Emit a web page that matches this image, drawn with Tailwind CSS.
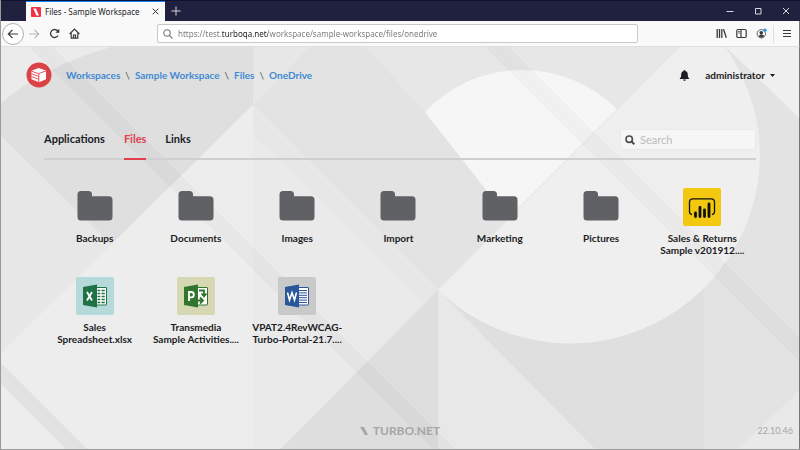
<!DOCTYPE html>
<html lang="en">

<head>
  <meta charset="UTF-8">
  <meta name="viewport" content="width=device-width, initial-scale=1.0">
  <title>Files - Sample Workspace</title>
  <script src="https://cdn.jsdelivr.net/npm/@tailwindcss/browser@4"></script>
</head>

<body class="min-h-screen flex flex-col bg-[#e8e8e8] border-l border-b border-[#999999] font-['Lato',sans-serif] text-[#1b1c24]">

  <!-- Title bar -->
  <div class="h-[21px] flex items-stretch bg-[#20213f] border-t border-[#101033] font-['Noto_Sans',sans-serif]">
    <div class="ml-[25px] w-[139px] flex items-center bg-[#f9f9fa] border-t border-[#0a84ff] pl-[5px] pr-1.5">
      <svg class="size-2.5 shrink-0" viewBox="0 0 10 10">
        <rect width="10" height="10" rx="1" fill="#ee3347" />
        <path d="M2.3 1.5h2.6L8 8.5H5.4z" fill="#fff" />
      </svg>
      <span class="ml-1 flex-1 text-[8px] leading-3 whitespace-nowrap">Files - Sample Workspace</span>
      <button type="button" aria-label="Close tab">
        <svg class="size-[7px]" viewBox="0 0 7 7" stroke="#333" fill="none"><path d="M.7.7l5.6 5.6M6.3.7L.7 6.3" /></svg>
      </button>
    </div>
    <button type="button" aria-label="New tab" class="ml-1.5">
      <svg class="size-[10px]" viewBox="0 0 10 10" stroke="#d4d4df" fill="none"><path d="M5 .5v9M.5 5h9" /></svg>
    </button>
    <div class="ml-auto mr-2.5 flex items-center gap-5 text-[#d8d8e2]">
      <button type="button" aria-label="Minimize">
        <svg class="size-2" viewBox="0 0 8 8" stroke="currentColor" fill="none"><path d="M.5 4.5h7" /></svg>
      </button>
      <button type="button" aria-label="Maximize">
        <svg class="size-2" viewBox="0 0 8 8" stroke="currentColor" fill="none"><path d="M1.5 1.5h5.5v5.5h-5.5z" /></svg>
      </button>
      <button type="button" aria-label="Close window">
        <svg class="size-2" viewBox="0 0 8 8" stroke="currentColor" fill="none"><path d="M1 1l6 6M7 1L1 7" /></svg>
      </button>
    </div>
  </div>

  <!-- Toolbar -->
  <div class="h-[26px] flex items-center bg-[#f9f9fa] border-b border-[#e0e0e1] border-r border-r-[#777777] pl-px pr-2 text-[#3a3a3e] font-['Noto_Sans',sans-serif]">
    <button type="button" aria-label="Back" class="size-[22px] flex items-center justify-center rounded-full border border-[#b1b1b1] bg-white">
      <svg class="size-3" viewBox="0 0 12 12" stroke="currentColor" stroke-width="1.2" fill="none"><path d="M11 6H1.500M5.500 1.800L1.300 6l4.200 4.200" /></svg>
    </button>
    <button type="button" aria-label="Forward" class="ml-1 text-[#b5b5b8]">
      <svg class="size-3" viewBox="0 0 12 12" stroke="currentColor" stroke-width="1.2" fill="none"><path d="M1 6h9.500M6.500 1.800L10.700 6l-4.200 4.200" /></svg>
    </button>
    <button type="button" aria-label="Reload" class="ml-[9px]">
      <svg class="size-[11px]" viewBox="0 0 11 11" stroke="currentColor" stroke-width="1.3" fill="none"><path d="M9 7.500A4 4 0 1 1 8.500 2.800L9.500 4" /><path d="M10.300.8v3.900H6.400z" fill="currentColor" stroke="none" /></svg>
    </button>
    <button type="button" aria-label="Home" class="ml-[9px]">
      <svg class="size-[11px]" viewBox="0 0 11 11" stroke="currentColor" stroke-width="1.2" fill="none"><path d="M.6 6L5.500 1l4.900 5M2.200 5v5.200h6.600V5M4.500 10V7h2v3" /></svg>
    </button>
    <div class="ml-[77px] h-[19px] w-[61%] flex items-center bg-white border border-[#c8c8c8] rounded-xs pl-[5px]">
      <svg class="size-[10px] shrink-0" viewBox="0 0 10 10" stroke="#77777a" stroke-width="1.1" fill="none"><circle cx="4" cy="4" r="3.2" /><path d="M6.400 6.400L9.500 9.500" /></svg>
      <!-- the gradient darkens the host name -->
      <input type="text" aria-label="Address" value="https://test.turboqa.net/workspace/sample-workspace/files/onedrive" class="ml-[5px] flex-1 min-w-0 h-4 text-[8px] text-transparent bg-clip-text bg-[linear-gradient(90deg,#77777b_44px,#1d1d20_44px,#1d1d20_90px,#77777b_90px)] outline-none">
    </div>
    <div class="ml-auto flex items-center">
      <button type="button" aria-label="Library">
        <svg class="size-[11px]" viewBox="0 0 11 11" stroke="currentColor" stroke-width="1.3" fill="none"><path d="M1.200 1v9M3.500 1v9M5.800 1v9M7.500 1.300l2.800 8.500" /></svg>
      </button>
      <button type="button" aria-label="Sidebars" class="ml-[9px]">
        <svg class="size-[11px]" viewBox="0 0 11 11" stroke="currentColor" stroke-width="1.2" fill="none"><rect x=".8" y="1.5" width="9.4" height="8" rx="1.2" /><path d="M5 1.500v8M2.300 3.500h1.400M2.300 5h1.400" /></svg>
      </button>
      <button type="button" aria-label="Account" class="ml-[9px]">
        <svg class="size-[11px]" viewBox="0 0 11 11" fill="none"><circle cx="5.3" cy="5.8" r="4.2" stroke="#66666a" /><circle cx="5.3" cy="4.8" r="1.8" fill="#3a3a3e" /><path d="M2.500 8.300c1-2.400 4.600-2.400 5.600 0-1.500 1.500-4.100 1.500-5.600 0z" fill="#3a3a3e" /><circle cx="9" cy="2.2" r="1.7" fill="#2d9be8" /></svg>
      </button>
      <div class="ml-1.5 h-[18px] w-px bg-[#dededf]"></div>
      <button type="button" aria-label="Menu" class="ml-2">
        <svg class="size-[9px]" viewBox="0 0 9 9" stroke="currentColor" stroke-width="1.2" fill="none"><path d="M1 1.500h8M1 4.500h8M1 7.500h8" /></svg>
      </button>
    </div>
  </div>

  <main class="relative flex-1 flex flex-col border-r border-[#777777] overflow-hidden">
    <!-- Geometric backdrop -->
    <svg class="absolute inset-0 size-full" viewBox="1 47 798 402" preserveAspectRatio="xMidYMid slice" aria-hidden="true">
      <rect x="0" y="46" width="800" height="404" fill="#e7e7e7" />
      <path d="M0 46h115Q45 65 0 104z" fill="#ebebeb" />
      <path d="M115 46H253V105L112 245 0 135V104Q45 65 115 46z" fill="#dfdfdf" />
      <path d="M253 105L0 354V450H280V130z" fill="#ededed" />
      <path d="M253 105L438 290 280 450H253z" fill="#eaeaea" />
      <path d="M425 112L367 46H310L253 105 438 290 510 218z" fill="#e3e3e3" />
      <path d="M253 105L438 290 425 303 253 135z" fill="#e7e7e7" />
      <path d="M365 46H685L617 109Q520 20 425 112z" fill="#e7e7e7" />
      <path d="M725 46L800 120V450H438V290z" fill="#e3e3e3" />
      <path d="M438 290L596 450H704V250z" fill="#dfdfdf" />
      <path d="M438 290V450H596z" fill="#e8e8e8" />
      <path d="M438 290V450H280z" fill="#dedede" />
      <path d="M725 46H800V118z" fill="#f0f0f0" />
      <path d="M681 46H725C748 82 760 115 760 157A190 190 0 0 1 438 290z" fill="#efefef" />
      <path d="M425 112A134 134 0 0 1 617 109L508 218z" fill="#f6f6f6" />
      <path d="M800 390V450H737z" fill="#e9e9e9" />
      <path d="M28 46H52L456 450H434z" fill="#000" fill-opacity=".025" />
      <path d="M0 362V383L67 450H88z" fill="#000" fill-opacity=".045" />
      <path d="M484 46H508L800 338V362L660 222z" fill="#000" fill-opacity=".025" />
    </svg>

    <div class="relative flex-1 flex flex-col">
      <!-- Header -->
      <header class="mt-[15px] ml-[25px] mr-6 h-[26px] flex items-center text-[10px] leading-4">
        <a href="#" aria-label="Home">
          <svg class="size-[26px]" viewBox="0 0 26 26">
            <circle cx="13" cy="13" r="12.5" fill="#db4246" />
            <path d="M5.500 8.800L12.500 6l7.500 2.500v8.700L13 20.200l-7.500-3z" fill="#fff" />
            <path d="M5.500 9.200l7 2.500 7.500-2.800M12.800 11.700V20M5.500 11.800l7.300 2.700M5.500 14.600l7.300 2.700" stroke="#db4246" stroke-width=".9" fill="none" />
          </svg>
        </a>
        <nav class="ml-3.5 flex items-center gap-[5px] font-bold text-[#3f8ad2] whitespace-nowrap">
          <a href="#">Workspaces</a>
          <span class="font-normal text-[#555555]">\</span>
          <a href="#">Sample Workspace</a>
          <span class="font-normal text-[#555555]">\</span>
          <a href="#">Files</a>
          <span class="font-normal text-[#555555]">\</span>
          <a href="#">OneDrive</a>
        </nav>
        <button type="button" aria-label="Notifications" class="ml-auto">
          <svg class="size-[11px]" viewBox="0 0 11 11" fill="#1b1c24"><path d="M5.500 0c.6 0 .9.400.9.900C8 1.400 8.800 2.700 8.800 4.500c0 2.200.5 3 1.400 3.900v.6H.8v-.6c.9-.9 1.400-1.700 1.400-3.900C2.200 2.700 3 1.400 4.600.9c0-.5.3-.9.9-.9zM4.200 9.500h2.600c0 .8-.5 1.300-1.300 1.300s-1.300-.5-1.300-1.300z" /></svg>
        </button>
        <button type="button" class="ml-[15px] flex items-center gap-[5px] font-bold">
          administrator
          <svg class="w-[5px] h-[3px]" viewBox="0 0 5 3" fill="currentColor"><path d="M0 0h5L2.500 3z" /></svg>
        </button>
      </header>

      <!-- Tabs and search -->
      <div class="mt-[41px] mx-[43px] h-[31px] flex items-start border-b-2 border-[#cfcfcf] text-[11px] leading-4 font-bold">
        <nav class="flex h-[31px] gap-[19px]">
          <a href="#" class="pt-0.5">Applications</a>
          <a href="#" class="pt-0.5 text-[#e0404f] border-b-2 border-[#e0404f]">Files</a>
          <a href="#" class="pt-0.5">Links</a>
        </nav>
        <div class="ml-auto h-[21px] w-[136px] flex items-center rounded-xs bg-[#f6f6f6] border border-[#e9e9e9] pl-1">
          <svg class="size-[10px] shrink-0" viewBox="0 0 10 10" stroke="#4b4c50" stroke-width="1.6" fill="none"><circle cx="4.2" cy="4.2" r="3.2" /><path d="M6.500 6.500L9.300 9.300" stroke-width="2" /></svg>
          <input type="search" aria-label="Search" placeholder="Search" class="ml-[5px] flex-1 min-w-0 bg-transparent text-[11px] font-normal placeholder:text-[#bcbcbc] outline-none">
        </div>
      </div>

      <!-- Files -->
      <div class="mt-7 ml-[43px] mr-[46px] grid grid-cols-7 gap-y-[21px] text-center text-[10px] leading-3 font-bold">
        <a href="#" class="flex flex-col items-center gap-1.5">
          <svg class="size-[38px]" viewBox="0 0 38 38" fill="#5f6164"><path d="M5 3h7.500a3.500 3.500 0 0 1 3.500 3.500v1.800h17a3.500 3.500 0 0 1 3.500 3.500V29a3.500 3.500 0 0 1-3.500 3.500H5A3.500 3.500 0 0 1 1.500 29V6.500A3.500 3.500 0 0 1 5 3z" /></svg>
          Backups
        </a>
        <a href="#" class="flex flex-col items-center gap-1.5">
          <svg class="size-[38px]" viewBox="0 0 38 38" fill="#5f6164"><path d="M5 3h7.500a3.500 3.500 0 0 1 3.500 3.500v1.800h17a3.500 3.500 0 0 1 3.500 3.500V29a3.500 3.500 0 0 1-3.500 3.500H5A3.500 3.500 0 0 1 1.500 29V6.500A3.500 3.500 0 0 1 5 3z" /></svg>
          Documents
        </a>
        <a href="#" class="flex flex-col items-center gap-1.5">
          <svg class="size-[38px]" viewBox="0 0 38 38" fill="#5f6164"><path d="M5 3h7.500a3.500 3.500 0 0 1 3.500 3.500v1.800h17a3.500 3.500 0 0 1 3.500 3.500V29a3.500 3.500 0 0 1-3.500 3.500H5A3.500 3.500 0 0 1 1.500 29V6.500A3.500 3.500 0 0 1 5 3z" /></svg>
          Images
        </a>
        <a href="#" class="flex flex-col items-center gap-1.5">
          <svg class="size-[38px]" viewBox="0 0 38 38" fill="#5f6164"><path d="M5 3h7.500a3.500 3.500 0 0 1 3.500 3.500v1.800h17a3.500 3.500 0 0 1 3.500 3.500V29a3.500 3.500 0 0 1-3.500 3.500H5A3.500 3.500 0 0 1 1.500 29V6.500A3.500 3.500 0 0 1 5 3z" /></svg>
          Import
        </a>
        <a href="#" class="flex flex-col items-center gap-1.5">
          <svg class="size-[38px]" viewBox="0 0 38 38" fill="#5f6164"><path d="M5 3h7.500a3.500 3.500 0 0 1 3.500 3.500v1.800h17a3.500 3.500 0 0 1 3.500 3.500V29a3.500 3.500 0 0 1-3.500 3.500H5A3.500 3.500 0 0 1 1.500 29V6.500A3.500 3.500 0 0 1 5 3z" /></svg>
          Marketing
        </a>
        <a href="#" class="flex flex-col items-center gap-1.5">
          <svg class="size-[38px]" viewBox="0 0 38 38" fill="#5f6164"><path d="M5 3h7.500a3.500 3.500 0 0 1 3.500 3.500v1.800h17a3.500 3.500 0 0 1 3.500 3.500V29a3.500 3.500 0 0 1-3.500 3.500H5A3.500 3.500 0 0 1 1.500 29V6.500A3.500 3.500 0 0 1 5 3z" /></svg>
          Pictures
        </a>
        <a href="#" class="flex flex-col items-center gap-1.5">
          <svg class="size-[38px]" viewBox="0 0 38 38">
            <rect width="38" height="38" rx="2" fill="#f2c811" />
            <path d="M9 26.500c-1.700-.3-2.500-1.300-2.500-2.800V14c0-2 1.200-3.200 3.200-3.200h18.600c2 0 3.200 1.200 3.200 3.200v9.700c0 1.500-.8 2.500-2.500 2.800" fill="none" stroke="#111" stroke-width="1.3" />
            <path d="M12.500 25v3.500M17 19.500v9M21.500 22v6.500M26 16v12.500" stroke="#111" stroke-width="2.8" stroke-linecap="round" />
          </svg>
          <span>Sales &amp; Returns<br>Sample v201912....</span>
        </a>
        <a href="#" class="flex flex-col items-center gap-1.5">
          <svg class="size-[38px]" viewBox="0 0 38 38">
            <rect width="38" height="38" rx="2" fill="#b5dad9" />
            <rect x="19" y="10.5" width="11.5" height="17.5" rx=".5" fill="#fff" stroke="#1f7244" />
            <path d="M21.500 13.500h2.800M21.500 16.500h2.800M21.500 19.500h2.800M21.500 22.500h2.800M21.500 25.500h2.800M25.500 13.500h3.300M25.500 16.500h3.300M25.500 19.500h3.300M25.500 22.500h3.300M25.500 25.500h3.300" stroke="#1f7244" stroke-width="1.5" />
            <path d="M7 10l14-2.500v23L7 28z" fill="#1f7244" />
            <path d="M11 15l5 8.500M16 15l-5 8.500" stroke="#fff" stroke-width="1.8" />
          </svg>
          <span>Sales<br>Spreadsheet.xlsx</span>
        </a>
        <a href="#" class="flex flex-col items-center gap-1.5">
          <svg class="size-[38px]" viewBox="0 0 38 38">
            <rect width="38" height="38" rx="2" fill="#d5d8b2" />
            <rect x="19" y="10.5" width="11.5" height="17.5" rx=".5" fill="#fff" stroke="#31752f" />
            <path d="M22 13.500h5v4.500M24.500 16.500l2.500 2.800 2.500-2.800M21 23.500h4M23 20.500l3 3-3 3" stroke="#31752f" stroke-width="1.8" fill="none" />
            <path d="M7 10l14-2.500v23L7 28z" fill="#31752f" />
            <path d="M12 24v-9h2.200a2.500 2.500 0 0 1 0 5.300H12" stroke="#fff" stroke-width="1.8" fill="none" />
          </svg>
          <span>Transmedia<br>Sample Activities....</span>
        </a>
        <a href="#" class="flex flex-col items-center gap-1.5">
          <svg class="size-[38px]" viewBox="0 0 38 38">
            <rect width="38" height="38" rx="2" fill="#c9c9ca" />
            <rect x="19" y="10.5" width="11.5" height="17.5" rx=".5" fill="#fff" stroke="#2a569a" />
            <path d="M21 13.500h8M21 15.900h8M21 18.300h8M21 20.700h8M21 23.100h8M21 25.500h8" stroke="#2a569a" />
            <path d="M7 10l14-2.500v23L7 28z" fill="#2a569a" />
            <path d="M9.500 15.500l2 7.500L14 15.800l2.500 7.200 2-7.500" stroke="#fff" stroke-width="1.6" fill="none" />
          </svg>
          <span>VPAT2.4RevWCAG-<br>Turbo-Portal-21.7....</span>
        </a>
      </div>

      <!-- Footer -->
      <footer class="mt-auto mb-2.5 grid grid-cols-3 items-center px-1.5 text-[#a6a6a6]">
        <div class="col-start-2 flex items-center justify-center gap-[5px] text-xs leading-4 font-bold">
          <svg class="w-2 h-2" viewBox="0 0 8 8" fill="currentColor"><path d="M0 0h4l4 8H5z" /></svg>
          TURBO.NET
        </div>
        <div class="text-right text-[9px] leading-3">22.10.46</div>
      </footer>
    </div>
  </main>
</body>

</html>
